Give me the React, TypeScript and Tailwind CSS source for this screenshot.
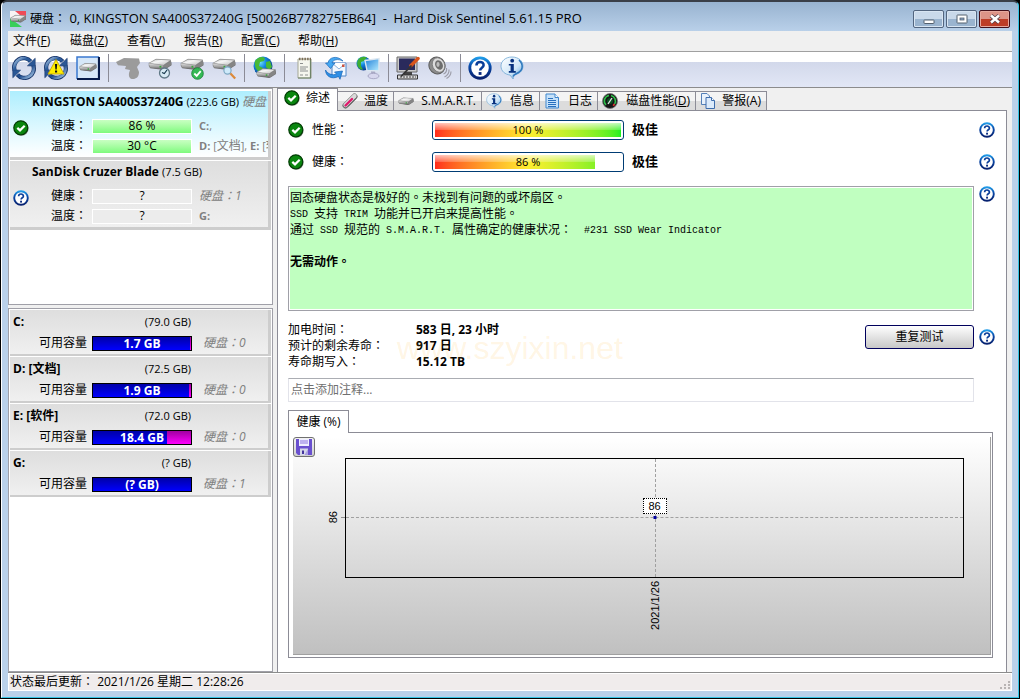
import type { ReactNode } from "react";

/* ---------- text ---------- */

const RUNS = /([：。]+|[\u3400-\u9fff]+)/;
const PUNCTUATION = /^[：。]+$/;
const CJK = /^[\u3400-\u9fff]+$/;

/* Chinese text with its Latin runs in a size of their own and centred full-width punctuation. */
function Mixed({ text, latin = "text-xs" }: { text: string; latin?: string }) {
  return (
    <span className="whitespace-pre">
      {text.split(RUNS).map((part, i) => {
        if (!part) return null;
        if (PUNCTUATION.test(part)) return <span key={i} className="font-['Noto_Sans_CJK_TC',sans-serif] leading-none">{part}</span>;
        if (CJK.test(part)) return part;
        return <span key={i} className={latin}>{part}</span>;
      })}
    </span>
  );
}

/* ---------- icons ---------- */

function Defs() {
  return (
    <svg className="absolute size-0" aria-hidden="true">
      <defs>
        <linearGradient id="steel" x1="0" y1="0" x2="0" y2="1">
          <stop offset="0" stopColor="#dcdcdc" />
          <stop offset="0.5" stopColor="#a6a6a6" />
          <stop offset="1" stopColor="#5c5c5c" />
        </linearGradient>
        <linearGradient id="lid" x1="0" y1="0" x2="1" y2="1">
          <stop offset="0" stopColor="#b4b4b4" />
          <stop offset="0.4" stopColor="#f6f6f6" />
          <stop offset="1" stopColor="#b9b9b9" />
        </linearGradient>
        <linearGradient id="arrow" gradientUnits="userSpaceOnUse" x1="3" y1="2" x2="20" y2="22">
          <stop offset="0" stopColor="#b5d0ea" />
          <stop offset="0.3" stopColor="#2c5c9c" />
          <stop offset="0.65" stopColor="#1e4a8c" />
          <stop offset="1" stopColor="#a8c8e6" />
        </linearGradient>
        <linearGradient id="ring" x1="0" y1="0" x2="0" y2="1">
          <stop offset="0" stopColor="#1f9be8" />
          <stop offset="0.4" stopColor="#0a49a8" />
          <stop offset="1" stopColor="#06206e" />
        </linearGradient>
        <linearGradient id="bubble" x1="0" y1="0" x2="1" y2="1">
          <stop offset="0" stopColor="#ffffff" />
          <stop offset="0.6" stopColor="#cfe6f8" />
          <stop offset="1" stopColor="#4b98d6" />
        </linearGradient>
        <radialGradient id="earth" cx="0.35" cy="0.3" r="0.8">
          <stop offset="0" stopColor="#6fe0ff" />
          <stop offset="0.4" stopColor="#1287e0" />
          <stop offset="1" stopColor="#052a78" />
        </radialGradient>
        <linearGradient id="screen" x1="0" y1="0" x2="1" y2="1">
          <stop offset="0" stopColor="#1e7fd8" />
          <stop offset="1" stopColor="#b6ecff" />
        </linearGradient>
      </defs>
    </svg>
  );
}

function Icon({ className = "size-6", box = 24, children }: { className?: string; box?: number; children: ReactNode }) {
  return (
    <svg viewBox={`0 0 ${box} ${box}`} className={`shrink-0 ${className}`} aria-hidden="true">
      {children}
    </svg>
  );
}

function CheckIcon({ className = "size-4" }: { className?: string }) {
  return (
    <Icon className={className} box={16}>
      <circle cx="8.6" cy="8.8" r="7" fill="#9a9a9a" />
      <circle cx="7.8" cy="7.8" r="7" fill="#0a860f" stroke="#033c05" strokeWidth="1.2" />
      <path d="M4.3 7.9 7 10.4l4.7-4.6" fill="none" stroke="#fff" strokeWidth="2.2" />
    </Icon>
  );
}

function HelpIcon({ className = "size-4" }: { className?: string }) {
  return (
    <Icon className={className} box={16}>
      <circle cx="8" cy="8" r="6.8" fill="#fff" stroke="url(#ring)" strokeWidth="1.9" />
      <path d="M5.6 6.3C5.7 3.2 10.5 3.3 10.4 6.2c0 1.6-2.3 1.6-2.3 3.4" fill="none" stroke="#0a3d98" strokeWidth="1.7" />
      <rect x="7.1" y="10.7" width="1.9" height="1.9" fill="#0a2c80" />
    </Icon>
  );
}

function InfoBubble({ className = "size-6" }: { className?: string }) {
  return (
    <Icon className={className}>
      <path d="M12 1C5.5 1 1 5 1 10.200c0 5 4.200 8.300 9 8.800l3.200 4v-4C19 18.400 23 15 23 10.200 23 5 18.500 1 12 1Z" fill="url(#bubble)" stroke="#6fa8d4" strokeWidth="0.8" />
      <path d="M19 4c5 5 4 11-2.500 13.500-2 1-3 1.500-3.300 3" fill="none" stroke="#2f78bd" strokeWidth="1.5" />
      <circle cx="12.2" cy="4.700" r="1.900" fill="#06307e" />
      <path d="M8.800 8h5v7h2v1.700H8.800V15h1.800V9.600H8.800Z" fill="#06307e" />
    </Icon>
  );
}

function DriveShape() {
  return (
    <g>
      <path d="M.8 7.500 8 3l14.500.8 1 3v2.500l-7.300 4.700-14-1.700L.8 10Z" fill="#707070" />
      <path d="M.8 7.300 8 3.200l14.800 1-7.300 5Z" fill="url(#lid)" stroke="#8f8f8f" strokeWidth="0.600" />
      <path d="m.8 7.500 14.700 2v4L1.800 11.600Z" fill="url(#steel)" />
      <path d="m15.500 9.500 7.300-5.100.4 4.600-7.700 4.600Z" fill="#858585" />
      <path d="M11.500 9.800h1.800v1.800h-1.800Z" fill="#37a63b" />
    </g>
  );
}

function RefreshShape() {
  return (
    <g fill="none">
      <path d="M2.700 14.500A9.300 9.300 0 0 1 18.600 5.400" stroke="#17356b" strokeWidth="4.200" />
      <path d="M21.300 9.500A9.300 9.300 0 0 1 5.400 18.600" stroke="#17356b" strokeWidth="4.200" />
      <path d="M23.200 2.200v8l-7.800-.4Z" fill="#2a5796" stroke="#17356b" strokeWidth="0.600" />
      <path d="M.8 21.800v-8l7.800.4Z" fill="#2a5796" stroke="#17356b" strokeWidth="0.600" />
      <path d="M2.700 14A9.300 9.300 0 0 1 18.600 5.400" stroke="url(#arrow)" strokeWidth="2.900" />
      <path d="M21.300 10A9.300 9.300 0 0 1 5.400 18.600" stroke="url(#arrow)" strokeWidth="2.900" />
    </g>
  );
}

const refreshIcon = <Icon><RefreshShape /></Icon>;

const warnIcon = (
  <Icon>
    <RefreshShape />
    <path d="M12 3.500 20 18H4Z" fill="#ffee00" stroke="#c7a800" strokeWidth="0.900" />
    <path d="M10.900 8h2.300l-.5 5.500h-1.300Z" fill="#111" />
    <rect x="11" y="14.500" width="2.100" height="2" fill="#111" />
  </Icon>
);

const selectedDriveIcon = (
  <Icon>
    <path d="M1 1h22v22H1Z" fill="#d6e7f8" />
    <path d="M1 23V1h22" fill="none" stroke="#3a78cf" strokeWidth="1.500" />
    <path d="M23 1v22H1" fill="none" stroke="#061a4a" strokeWidth="2.200" />
    <g transform="translate(3 5) scale(.75)"><DriveShape /></g>
  </Icon>
);

const greyDriveIcon = (
  <Icon>
    <path d="M0 6 8 2l15 .5L24 7l-3 4 2 5c0 5-3 7-6 7s-4.500-2-4-6l1-3-5-1 1-3-8-.8Z" fill="#9b9b9b" />
  </Icon>
);

const driveClockIcon = (
  <Icon>
    <DriveShape />
    <circle cx="16.500" cy="17" r="5" fill="#d7eaf4" stroke="#5f7886" strokeWidth="1.300" />
    <path d="m19 14-2.700 3.500L14 16.500" fill="none" stroke="#16384c" strokeWidth="1.200" />
  </Icon>
);

const driveCheckIcon = (
  <Icon>
    <DriveShape />
    <circle cx="17.500" cy="17.500" r="5.800" fill="#35b955" stroke="#147a30" strokeWidth="0.800" />
    <path d="m14.300 17.500 2.400 2.400 4-4.700" fill="none" stroke="#fff" strokeWidth="1.800" />
  </Icon>
);

const driveSearchIcon = (
  <Icon>
    <DriveShape />
    <path d="m17.500 16.500 5.700 6" stroke="#dc8a3a" strokeWidth="2.200" />
    <circle cx="15.500" cy="14.500" r="3.600" fill="#cfeafa" stroke="#7fa9c4" strokeWidth="1.200" />
  </Icon>
);

const globeDriveIcon = (
  <Icon>
    <circle cx="11" cy="10" r="9.500" fill="url(#earth)" />
    <path d="M3 5c3-4 7-5 10-3l-1 3-4 1-1 4 4 2-1 5C5 16 2 11 3 5Zm11 1 4-1 2 6-3 3-3-3Z" fill="#48b935" />
    <g transform="translate(4 10) scale(.85)"><DriveShape /></g>
  </Icon>
);

const notepadIcon = (
  <Icon>
    <path d="M6 3h13v19H6Z" fill="#f5f6ee" stroke="#a5a795" strokeWidth="1" />
    <path d="M18.500 3v19H6" fill="none" stroke="#6f8468" strokeWidth="1.200" />
    <path d="M7 3h12" stroke="#7a6c55" strokeWidth="2.500" strokeDasharray="1.500 1.200" />
    <path d="M8 7.500h3m-3 3.500h8M8 13h6m-6 2h8m-8 4h3m2 0h3" stroke="#8d9090" strokeWidth="1" />
  </Icon>
);

const mailSyncIcon = (
  <Icon>
    <path d="M8 7h14v13H8Z" fill="#f2f8ff" stroke="#4e86c8" strokeWidth="1" />
    <path d="m8 7 7 6 7-6" fill="#fff" stroke="#8bb0dc" strokeWidth="1" />
    <rect x="18" y="8.500" width="2.500" height="2.500" fill="#cc5540" />
    <path d="M19 5C13-1 5 1 4 7H1.500l5 5.500L11 7H8c1-3.500 6-4.500 11-2Z" fill="#45a8f2" stroke="#1764b4" strokeWidth="0.700" />
    <path d="M1.500 14c0 6 6 10 13 6.500l1.500 2.800 2.500-8.300-8 1 2 2C9 19.500 4 18.500 1.500 14Z" fill="#2e8fe6" stroke="#1764b4" strokeWidth="0.700" />
  </Icon>
);

const networkIcon = (
  <Icon>
    <circle cx="7.500" cy="7.500" r="7" fill="url(#earth)" />
    <path d="M1.500 5C3 1 8 0 11 1.500L8 5l-3 1v4l2 4C2 13 .5 9 1.500 5Z" fill="#3fae31" />
    <path d="m15 15 4-.3.500 4h-4.200Z" fill="#a9a9c4" />
    <ellipse cx="17.500" cy="20" rx="5.500" ry="2.700" fill="#d7d7ee" stroke="#9d9dbd" strokeWidth="0.800" />
    <path d="m9 4.500 14-2v12.500l-12-.5Z" fill="url(#screen)" stroke="#dbe6f0" strokeWidth="1.400" />
  </Icon>
);

const monitorToolIcon = (
  <Icon>
    <path d="M1 1h20v15H1Z" fill="#c9c9c9" stroke="#6b6b6b" strokeWidth="1" />
    <path d="M3 2.500h16V14H3Z" fill="#2a2a5c" />
    <path d="M8 16h8v3H8Z" fill="#444" />
    <path d="M1.500 19h20v4h-20Z" fill="#dadada" stroke="#333" strokeWidth="1" />
    <path d="M4 21h16" stroke="#444" strokeWidth="1" strokeDasharray="2 1" />
    <path d="m22 2.500-7 7" stroke="#d8541c" strokeWidth="3.500" strokeLinecap="round" />
    <path d="M15.500 9.500 5 20.500" stroke="#333" strokeWidth="1.800" />
  </Icon>
);

const speakerIcon = (
  <Icon>
    <ellipse cx="9" cy="9.500" rx="8" ry="8.500" fill="#8c8c8c" stroke="#5c5c5c" strokeWidth="1" transform="rotate(-25 9 9.500)" />
    <ellipse cx="10.500" cy="9" rx="6" ry="7.500" fill="#dcdcdc" stroke="#777" strokeWidth="0.800" transform="rotate(-25 10.500 9)" />
    <ellipse cx="11" cy="9" rx="3.700" ry="5" fill="#6d6d6d" transform="rotate(-25 11 9)" />
    <ellipse cx="10" cy="8.500" rx="1.600" ry="2.400" fill="#bdbdbd" />
    <path d="M18.500 12c.5 2.500-.8 5-3 6M21 13.500c.3 3.500-1.500 6-4.500 7.500M23 15.500c0 3-2 5.500-4.500 7" fill="none" stroke="#9b9ba6" strokeWidth="1.100" />
  </Icon>
);

const toolGroups: { label: string; icon: ReactNode }[][] = [
  [
    { label: "刷新", icon: refreshIcon },
    { label: "刷新警告", icon: warnIcon },
    { label: "磁盘视图", icon: selectedDriveIcon },
  ],
  [
    { label: "磁盘控制", icon: greyDriveIcon },
    { label: "磁盘计时", icon: driveClockIcon },
    { label: "磁盘测试", icon: driveCheckIcon },
    { label: "磁盘扫描", icon: driveSearchIcon },
  ],
  [{ label: "网络磁盘", icon: globeDriveIcon }],
  [
    { label: "生成报告", icon: notepadIcon },
    { label: "发送报告", icon: mailSyncIcon },
    { label: "网络状态", icon: networkIcon },
  ],
  [
    { label: "配置选项", icon: monitorToolIcon },
    { label: "声音", icon: speakerIcon },
  ],
  [
    { label: "帮助", icon: <HelpIcon className="size-6" /> },
    { label: "关于", icon: <InfoBubble /> },
  ],
];

const thermometerIcon = (
  <Icon className="size-4" box={16}>
    <path d="m3.500 12.500 9-9" stroke="#6d6d6d" strokeWidth="6" strokeLinecap="round" />
    <path d="m3.500 12 9-9" stroke="#d9d9d9" strokeWidth="4.200" strokeLinecap="round" />
    <path d="M3.500 12.500 10 6" stroke="#e0186c" strokeWidth="2.300" strokeLinecap="round" />
    <path d="m6 13.500 8-8" stroke="#5a5a5a" strokeWidth="0.900" />
  </Icon>
);

const documentIcon = (
  <Icon className="size-4" box={16}>
    <path d="M2 1h9l3.500 3.500V15H2Z" fill="#c6e2fa" stroke="#3f86cd" />
    <path d="M11 1v3.500h3.500" fill="#fff" stroke="#3f86cd" />
    <path d="M4 5.500h5M4 7.500h8m-8 2h8m-8 2h8M4 13.500h8" stroke="#2870be" strokeWidth="1" />
  </Icon>
);

const gaugeIcon = (
  <Icon className="size-4" box={16}>
    <circle cx="8" cy="8" r="7.500" fill="#151515" stroke="#777" strokeWidth="0.800" />
    <path d="M4 12a5.600 5.600 0 0 1 3-9.500" fill="none" stroke="#2dc04a" strokeWidth="1.600" />
    <path d="M9 2.500a5.600 5.600 0 0 1 3.500 8.500" fill="none" stroke="#2dc04a" strokeWidth="1.600" />
    <path d="m12.500 11-1.300 1.700" stroke="#e3342f" strokeWidth="1.800" />
    <circle cx="8" cy="8" r="3" fill="#0c4d22" />
    <path d="m6 11 4-6" stroke="#e8e8e8" strokeWidth="1.300" />
  </Icon>
);

const pagesIcon = (
  <Icon className="size-4" box={16}>
    <path d="M1.500.500H7L9.500 3v8.500h-8Z" fill="#e9f2fc" stroke="#5480b8" />
    <path d="M6 4.500h5.500L14.500 7.500v8H6Z" fill="#dcebfb" stroke="#3e6dac" />
    <path d="M11.500 4.500v3h3" fill="#fff" stroke="#3e6dac" />
  </Icon>
);

const saveIcon = (
  <Icon className="size-4" box={16}>
    <path d="M0 0h16v16H2L0 14Z" fill="#6950cf" />
    <path d="M3 0h10v7H3Z" fill="#eef" />
    <path d="M4 2h8M4 4h8" stroke="#8b75df" />
    <path d="M4 9.500h8V16H4Z" fill="#d4d6e8" />
    <path d="M6 15v-3.500h2V15Z" fill="#43339c" />
    <path d="m8.500 16 3.500-6v6Z" fill="#a79de0" />
  </Icon>
);

/* ---------- window chrome ---------- */

function TitleBar() {
  const button =
    "flex h-[18px] w-[31px] items-center justify-center rounded-[2px] border border-[#52657f] bg-linear-to-b from-[#c9d9ea] from-50% to-[#9ab4cf] to-50% shadow-[inset_0_0_0_1px_#d8e5f2]";
  return (
    <header className="flex h-[29px] shrink-0 items-center px-2 pt-1">
      <Icon className="size-4" box={16}>
        <path d="M0 0h16L0 16Z" fill="#f8f4f4" />
        <path d="M5 0h11v9Z" fill="#ee4b57" />
        <path d="M0 7v9h12Z" fill="#38cf5a" />
        <g transform="translate(0 2) scale(.68)"><DriveShape /></g>
      </Icon>
      <h1 className="ml-1 flex-1 truncate text-xs">
        <Mixed text="硬盘： 0, KINGSTON SA400S37240G [50026B778275EB64]  -  Hard Disk Sentinel 5.61.15 PRO" latin="text-[13px]" />
      </h1>
      <div className="flex gap-[2px]">
        <button type="button" aria-label="最小化" className={button}>
          <Icon className="h-4 w-4" box={16}><rect x="3" y="9" width="10" height="3.500" rx="0.500" fill="#fff" stroke="#53606f" /></Icon>
        </button>
        <button type="button" aria-label="最大化" className={button}>
          <Icon className="h-4 w-4" box={16}>
            <rect x="3" y="4" width="10" height="8" rx="0.500" fill="#fff" stroke="#53606f" />
            <rect x="6" y="7" width="4" height="2" fill="#8aa6c6" stroke="#53606f" strokeWidth="0.800" />
          </Icon>
        </button>
        <button
          type="button"
          aria-label="关闭"
          className="flex h-[18px] w-[31px] items-center justify-center rounded-[2px] border border-[#43101a] bg-linear-to-b from-[#dd9487] from-50% to-[#bd3d26] to-50% shadow-[inset_0_0_0_1px_#e5a99e]"
        >
          <Icon className="h-4 w-4" box={16}>
            <path d="m4 4.500 8 7m0-7-8 7" stroke="#53404a" strokeWidth="4.200" />
            <path d="m4 4.500 8 7m0-7-8 7" stroke="#fff" strokeWidth="2.500" />
          </Icon>
        </button>
      </div>
    </header>
  );
}

const menus = [
  ["文件", "F"],
  ["磁盘", "Z"],
  ["查看", "V"],
  ["报告", "R"],
  ["配置", "C"],
  ["帮助", "H"],
];

function MenuBar() {
  return (
    <nav className="flex h-[21px] items-center border-b border-[#a0a0a0] bg-[#f0f0f0]">
      {menus.map(([name, key]) => (
        <button key={key} type="button" className="w-[57px] pl-[5px] text-left whitespace-nowrap">
          {name}(<u>{key}</u>)
        </button>
      ))}
    </nav>
  );
}

function Toolbar() {
  return (
    <div className="h-9 border-b border-[#8c8c8c] bg-white">
      <div className="flex h-full items-center bg-linear-to-b from-transparent from-28% via-[#d2d8ea] via-28% to-[#e2e7f6] pb-1">
        {toolGroups.map((group, i) => (
          <div key={i} className="flex items-center">
            {i > 0 && <span className="flex w-2 justify-center"><span className="h-7 w-px bg-[#8b8b96]" /></span>}
            {group.map((tool) => (
              <button key={tool.label} type="button" aria-label={tool.label} className="flex size-8 items-center justify-center">
                {tool.icon}
              </button>
            ))}
          </div>
        ))}
      </div>
    </div>
  );
}

/* ---------- sidebar ---------- */

type Disk = {
  name: string;
  size: string;
  tag?: string;
  selected?: boolean;
  rows: { label: string; value: string; note: ReactNode }[];
};

const small = "text-[11px]";

const disks: Disk[] = [
  {
    name: "KINGSTON SA400S37240G",
    size: "(223.6 GB)",
    tag: "硬盘",
    selected: true,
    rows: [
      { label: "健康：", value: "86 %", note: <span className={small}><b>C:</b>,</span> },
      {
        label: "温度：",
        value: "30 °C",
        note: (
          <>
            <b className={small}>D: </b><Mixed text="[文档], " latin={small} /><b className={small}>E: </b><Mixed text="[软件]" latin={small} />
          </>
        ),
      },
    ],
  },
  {
    name: "SanDisk Cruzer Blade",
    size: "(7.5 GB)",
    rows: [
      { label: "健康：", value: "?", note: <i><Mixed text="硬盘：1" /></i> },
      { label: "温度：", value: "?", note: <b className={small}>G:</b> },
    ],
  },
];

function DiskCard({ disk }: { disk: Disk }) {
  return (
    <article
      className={`mb-px h-[69px] overflow-hidden border-r-3 border-b-3 border-[#cdcdcd] pt-[3px] whitespace-nowrap ${
        disk.selected ? "bg-linear-to-b from-[#aeeefe] to-white" : "bg-linear-to-b from-[#dedede] to-[#f0f0f0]"
      }`}
    >
      <h2 className="h-[22px] pl-[22px] leading-4">
        <b>{disk.name}</b> <span className={small}>{disk.size}</span>
        {disk.tag && <i className="ml-[3px] text-[#808080]">{disk.tag}</i>}
      </h2>
      <div className="flex">
        <span className="flex w-[41px] shrink-0 items-start pt-1 pl-[3px]">{disk.selected ? <CheckIcon /> : <HelpIcon />}</span>
        <div className="flex min-w-0 flex-1 flex-col">
          {disk.rows.map((row) => (
            <div key={row.label} className="flex h-5 items-center">
              <span className="w-[41px] shrink-0"><Mixed text={row.label} /></span>
              <span
                className={`flex h-[15px] w-[100px] shrink-0 items-center justify-center border border-white ${
                  disk.selected ? "bg-linear-to-b from-[#c8ffc2] to-[#7dfa7d]" : "bg-[#ececec]"
                }`}
              >
                {row.value}
              </span>
              <span className="ml-[7px] whitespace-pre text-[#808080]">{row.note}</span>
            </div>
          ))}
        </div>
      </div>
    </article>
  );
}

const volumes = [
  { name: "C:", size: "(79.0 GB)", free: "1.7 GB", used: 99, disk: 0 },
  { name: "D: [文档]", size: "(72.5 GB)", free: "1.9 GB", used: 98, disk: 0 },
  { name: "E: [软件]", size: "(72.0 GB)", free: "18.4 GB", used: 75, disk: 0 },
  { name: "G:", size: "(? GB)", free: "(? GB)", used: 100, disk: 1 },
];

function VolumeCard({ volume }: { volume: (typeof volumes)[number] }) {
  return (
    <article className="mb-px h-[46px] border-r-3 border-b-2 border-[#cdcdcd] bg-linear-to-b from-[#dedede] to-[#f0f0f0] pt-[2px]">
      <div className="flex h-5 w-[181px] items-center justify-between pl-[3px]">
        <b><Mixed text={volume.name} /></b>
        <span className={small}>{volume.size}</span>
      </div>
      <div className="flex h-[22px] items-center pl-[29px]">
        <span className="w-[53px] whitespace-nowrap">可用容量</span>
        <div className="relative h-[15px] w-[100px] border border-black bg-linear-to-b from-[#a000a0] to-[#ff00ff]">
          <div className="h-full bg-linear-to-b from-[#0000a8] to-[#0000ff]" style={{ width: `${volume.used}%` }} />
          <b className="absolute inset-0 text-center leading-[14px] text-white">{volume.free}</b>
        </div>
        <i className="ml-[11px] text-[#808080]"><Mixed text={`硬盘：${volume.disk}`} /></i>
      </div>
    </article>
  );
}

function Sidebar() {
  return (
    <aside className="flex w-[265px] shrink-0 flex-col gap-[3px]">
      <section className="h-[217px] border border-[#a0a0a8] bg-white p-px pt-[2px]">
        {disks.map((disk) => <DiskCard key={disk.name} disk={disk} />)}
      </section>
      <section className="flex-1 border border-[#a0a0a8] bg-white p-px">
        {volumes.map((volume) => <VolumeCard key={volume.name} volume={volume} />)}
      </section>
    </aside>
  );
}

/* ---------- detail pane ---------- */

const tabs: { label: ReactNode; key: string; icon: ReactNode; width: string }[] = [
  { key: "temp", label: "温度", icon: thermometerIcon, width: "w-[56px]" },
  { key: "smart", label: "S.M.A.R.T.", icon: <Icon className="size-4"><g transform="translate(0 4)"><DriveShape /></g></Icon>, width: "w-[88px]" },
  { key: "info", label: "信息", icon: <InfoBubble className="size-4" />, width: "w-[58px]" },
  { key: "log", label: "日志", icon: documentIcon, width: "w-[58px]" },
  { key: "perf", label: <>磁盘性能(<u>D</u>)</>, icon: gaugeIcon, width: "w-[98px]" },
  { key: "alert", label: "警报(A)", icon: pagesIcon, width: "w-[71px]" },
];

function TabStrip() {
  return (
    <div role="tablist" className="flex h-[22px] items-end">
      <button role="tab" type="button" aria-selected="true" className="z-10 -mb-px flex h-[23px] w-[61px] items-center gap-[6px] border border-b-0 border-[#8c8c96] bg-white px-[6px] pb-1 whitespace-nowrap">
        <CheckIcon />综述
      </button>
      {tabs.map((tab) => (
        <button
          key={tab.key}
          role="tab"
          type="button"
          aria-selected="false"
          className={`flex h-[19px] items-center justify-between border border-b-0 border-l-0 border-[#8c8c96] bg-linear-to-b from-[#f4f4f4] from-50% to-[#dcdcdc] to-50% pr-[5px] pl-1 whitespace-nowrap ${tab.width}`}
        >
          {tab.icon}
          <span>{tab.label}</span>
        </button>
      ))}
    </div>
  );
}

function HelpButton({ label }: { label: string }) {
  return (
    <button type="button" aria-label={label} className="flex size-4 shrink-0"><HelpIcon /></button>
  );
}

function Rating({ label, value }: { label: string; value: number }) {
  return (
    <div className="flex h-5 items-center">
      <CheckIcon />
      <span className="ml-2 w-[120px]"><Mixed text={`${label}：`} /></span>
      <div className="relative h-5 w-48 rounded-[3px] border border-[#003c74] bg-white p-[2px]">
        <div className="h-full overflow-hidden" style={{ width: `${value}%` }}>
          <div className="h-full w-[186px] bg-linear-to-r from-[#ff2a1e] via-[#ffee30] to-[#1cf022]">
            <div className="h-1/2 bg-linear-to-b from-white/70 to-white/20" />
          </div>
        </div>
        <span className="absolute inset-0 text-center text-[11px] leading-[18px]">{value} %</span>
      </div>
      <b className="ml-2 flex-1 text-[13px]">极佳</b>
      <HelpButton label={`${label}说明`} />
    </div>
  );
}

const stats = [
  ["加电时间：", "583 日, 23 小时"],
  ["预计的剩余寿命：", "917 日"],
  ["寿命期写入：", "15.12 TB"],
];

const report = [
  "固态硬盘状态是极好的。未找到有问题的或坏扇区。",
  "SSD 支持 TRIM 功能并已开启来提高性能。",
  "通过 SSD 规范的 S.M.A.R.T. 属性确定的健康状况：  #231 SSD Wear Indicator",
];

function HealthChart() {
  return (
    <section className="flex flex-1 flex-col">
      <div role="tablist" className="flex">
        <button role="tab" type="button" aria-selected="true" className="z-10 -mb-px h-[23px] w-[61px] border border-b-0 border-[#8c8c96] bg-white pb-px">
          <Mixed text="健康 (%)" />
        </button>
      </div>
      <div className="flex flex-1 border border-[#8c8c96] bg-white p-1 pr-px pb-[2px]">
        <div className="flex flex-1 flex-col border-r border-b border-[#a0a0a0] bg-linear-to-b from-white to-[#c0c0c0]">
          <div className="flex">
            <div className="flex w-[52px] shrink-0 flex-col items-end">
              <button type="button" aria-label="保存" className="flex h-5 w-[22px] items-center justify-center self-start rounded-[3px] border border-[#707070] bg-linear-to-b from-[#f2f2f2] to-[#cfcfcf]">
                {saveIcon}
              </button>
              <div className="mt-[54px] flex items-center">
                <span className="rotate-180 font-[Liberation_Sans] text-[11px] leading-4 [writing-mode:vertical-rl]">86</span>
                <span className="w-1 border-t border-[#909090]" />
              </div>
            </div>
            <div className="relative mt-[21px] mr-[26px] h-[120px] flex-1 border border-black">
              <div className="absolute top-[58px] right-0 left-0 border-t border-dashed border-[#a0a0a0]" />
              <div className="absolute inset-y-0 left-1/2 border-l border-dashed border-[#a0a0a0]" />
              <span className="absolute top-[39px] left-1/2 flex h-4 w-6 -translate-x-1/2 items-center justify-center border border-dotted border-black bg-white font-[Liberation_Sans] text-[11px]">86</span>
              <span className="absolute top-[57px] left-1/2 size-[3px] -translate-x-1/2 bg-[#0000a0]" />
            </div>
          </div>
          <div className="mr-[26px] ml-[52px] flex justify-center">
            <span className="mt-[3px] rotate-180 font-[Liberation_Sans] text-[11px] leading-4 [writing-mode:vertical-rl]">2021/1/26</span>
          </div>
        </div>
      </div>
    </section>
  );
}

function Overview() {
  return (
    <div className="mr-[5px] flex flex-1 flex-col border border-b-0 border-[#8c8c96] bg-white pt-[9px] pr-[11px] pb-[14px] pl-[10px]">
      <div className="flex flex-col gap-3">
        <Rating label="性能" value={100} />
        <Rating label="健康" value={86} />
      </div>
      <div className="mt-[14px] flex gap-[5px]">
        <div className="h-[125px] flex-1 border border-[#a0a0a8] bg-[#c0ffc0] px-px pt-[3px] leading-4 shadow-[inset_0_0_0_1px_#fff]">
          {report.map((line) => (
            <p key={line} className="h-4"><Mixed text={line} latin="align-middle font-[Liberation_Mono] text-[10px] leading-none" /></p>
          ))}
          <p className="mt-4 font-bold"><Mixed text="无需动作。" /></p>
        </div>
        <HelpButton label="状态说明" />
      </div>
      <div className="relative mt-[11px] flex items-start">
        <dl className="grid flex-1 grid-cols-[128px_1fr] leading-4">
          {stats.map(([label, value]) => (
            <div key={label} className="contents">
              <dt className="h-4"><Mixed text={label} /></dt>
              <dd className="h-4 font-bold"><Mixed text={value} /></dd>
            </div>
          ))}
        </dl>
        <span className="pointer-events-none absolute top-2 left-[109px] font-[Liberation_Sans] text-[32px] leading-9 text-[#ffb83c]/15">www.szyixin.net</span>
        <div className="mt-[3px] flex items-center gap-[5px]">
          <button type="button" className="h-6 w-[109px] rounded-[3px] border border-[#00005c] bg-linear-to-b from-white to-[#c8c8c8]">重复测试</button>
          <HelpButton label="测试说明" />
        </div>
      </div>
      <input
        aria-label="注释"
        placeholder="点击添加注释..."
        className="mt-2 mr-[21px] h-6 border border-[#e2e3ea] border-t-[#abadb3] bg-white px-[2px] pb-[2px] text-xs placeholder:text-[#707070]"
      />
      <div className="mt-2 flex flex-1 pr-[2px]"><HealthChart /></div>
    </div>
  );
}

export default function App() {
  return (
    <div className="flex min-h-screen flex-col bg-black px-px pb-px font-['Open_Sans','Noto_Sans_CJK_SC',sans-serif] text-xs text-black">
      <Defs />
      <div className="flex flex-1 flex-col rounded-t-md border border-t-2 border-[#35c4e4] border-t-[#3a3f48] border-l-white bg-[#bad1ea] bg-linear-to-b from-[#98b3d0] to-[#bad1ea] to-[30px]">
        <TitleBar />
        <main className="mx-[6px] mb-[6px] flex flex-1 flex-col bg-[#f0f0f0]">
          <MenuBar />
          <Toolbar />
          <div className="flex flex-1 gap-1 border-b border-[#8c8c8c]">
            <Sidebar />
            <section className="flex min-w-0 flex-1 flex-col">
              <TabStrip />
              <Overview />
            </section>
          </div>
          <footer className="flex h-[18px] items-center justify-between border border-white bg-[#f0ecec] pl-px">
            <Mixed text="状态最后更新： 2021/1/26 星期二 12:28:26" />
            <Icon className="size-3 self-end" box={12}>
              <path d="M9 3h2v2H9ZM5 6h2v2H5Zm4 0h2v2H9ZM1 9h2v2H1Zm4 0h2v2H5Zm4 0h2v2H9Z" fill="#b8b4b4" />
            </Icon>
          </footer>
        </main>
      </div>
    </div>
  );
}
